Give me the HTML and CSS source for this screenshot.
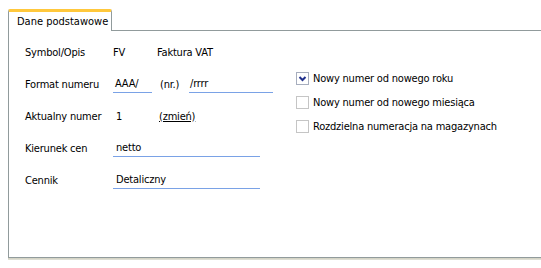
FILE: index.html
```html
<!DOCTYPE html>
<html lang="pl">
<head>
<meta charset="utf-8">
<link rel="stylesheet" href="styles.css">
</head>
<body>
<div class="tabs">
  <div class="tab">Dane podstawowe</div>
</div>
<div class="panel">
  <div class="form">
    <div class="fields">
      <div class="row">
        <span class="label">Symbol/Opis</span>
        <span class="val">FV</span>
        <span class="val desc">Faktura VAT</span>
      </div>
      <div class="row">
        <span class="label">Format numeru</span>
        <span class="input w-prefix">AAA/</span>
        <span class="val nr">(nr.)</span>
        <span class="input w-suffix">/rrrr</span>
      </div>
      <div class="row">
        <span class="label">Aktualny numer</span>
        <span class="val num">1</span>
        <a class="link">(zmień)</a>
      </div>
      <div class="row">
        <span class="label">Kierunek cen</span>
        <span class="input w-long">netto</span>
      </div>
      <div class="row">
        <span class="label">Cennik</span>
        <span class="input w-long">Detaliczny</span>
      </div>
    </div>
    <div class="checks">
      <div class="check">
        <span class="box checked"><svg viewBox="0 0 11 11" width="11" height="11"><path d="M2.5 4 L5.5 7 L8.5 4" fill="none" stroke="#21318c" stroke-width="2"/></svg></span>
        <span>Nowy numer od nowego roku</span>
      </div>
      <div class="check">
        <span class="box"></span>
        <span>Nowy numer od nowego miesiąca</span>
      </div>
      <div class="check">
        <span class="box"></span>
        <span>Rozdzielna numeracja na magazynach</span>
      </div>
    </div>
  </div>
</div>
<div class="shadow"></div>
</body>
</html>
```
FILE: styles.css
```css
html, body {
  margin: 0;
  padding: 0;
  background: #ffffff;
}
body {
  font-family: "DejaVu Sans Condensed", "DejaVu Sans", sans-serif;
  font-stretch: condensed;
  font-size: 11px;
  letter-spacing: -0.2px;
  color: #000000;
  width: 541px;
  height: 268px;
  overflow: hidden;
}
.tabs {
  display: flex;
  padding: 9px 0 0 8px;
}
.tab {
  position: relative;
  z-index: 1;
  box-sizing: border-box;
  width: 104px;
  height: 22px;
  margin-bottom: -1px;
  padding: 3px 0 0 8px;
  background: #ffffff;
  border: 1px solid #919b9c;
  border-top: 3px solid #ffc83c;
  border-bottom: none;
  border-radius: 2px 2px 0 0;
  line-height: 14px;
  letter-spacing: 0;
}
.panel {
  box-sizing: border-box;
  margin-left: 8px;
  width: 560px;
  height: 228px;
  border: 1px solid #919b9c;
  border-right: none;
  background: #ffffff;
}
.shadow {
  margin-left: 8px;
  height: 2px;
  background: linear-gradient(#d0d0bf, #e3e3db);
}
.form {
  display: flex;
  padding: 5px 0 0 16px;
}
.fields {
  display: flex;
  flex-direction: column;
  width: 271px;
}
.row {
  display: flex;
  align-items: center;
  height: 32px;
}
.label {
  width: 88px;
  flex: none;
}
.val {
  flex: none;
}
.desc {
  margin-left: 32px;
}
.nr {
  margin-left: 8px;
  width: 29px;
}
.num {
  padding-left: 3px;
  width: 43px;
}
.link {
  color: #000000;
  text-decoration: underline;
}
.input {
  box-sizing: border-box;
  height: 16px;
  padding: 0 0 0 3px;
  line-height: 14px;
  border-bottom: 1px solid #7aa2e6;
  margin-top: 2px;
  flex: none;
}
.w-prefix { width: 39px; padding-left: 2px; }
.w-suffix { width: 84px; padding-left: 1px; }
.w-long { width: 147px; }
.checks {
  display: flex;
  flex-direction: column;
  gap: 11px;
  padding-top: 36px;
}
.check {
  display: flex;
  align-items: center;
  gap: 4px;
  height: 13px;
}
.box {
  box-sizing: border-box;
  width: 13px;
  height: 13px;
  border: 1px solid #c5c5c5;
  background: #ffffff;
  display: flex;
  align-items: center;
  justify-content: center;
  flex: none;
}
.box.checked {
  border-color: #a7aebe;
}
```
